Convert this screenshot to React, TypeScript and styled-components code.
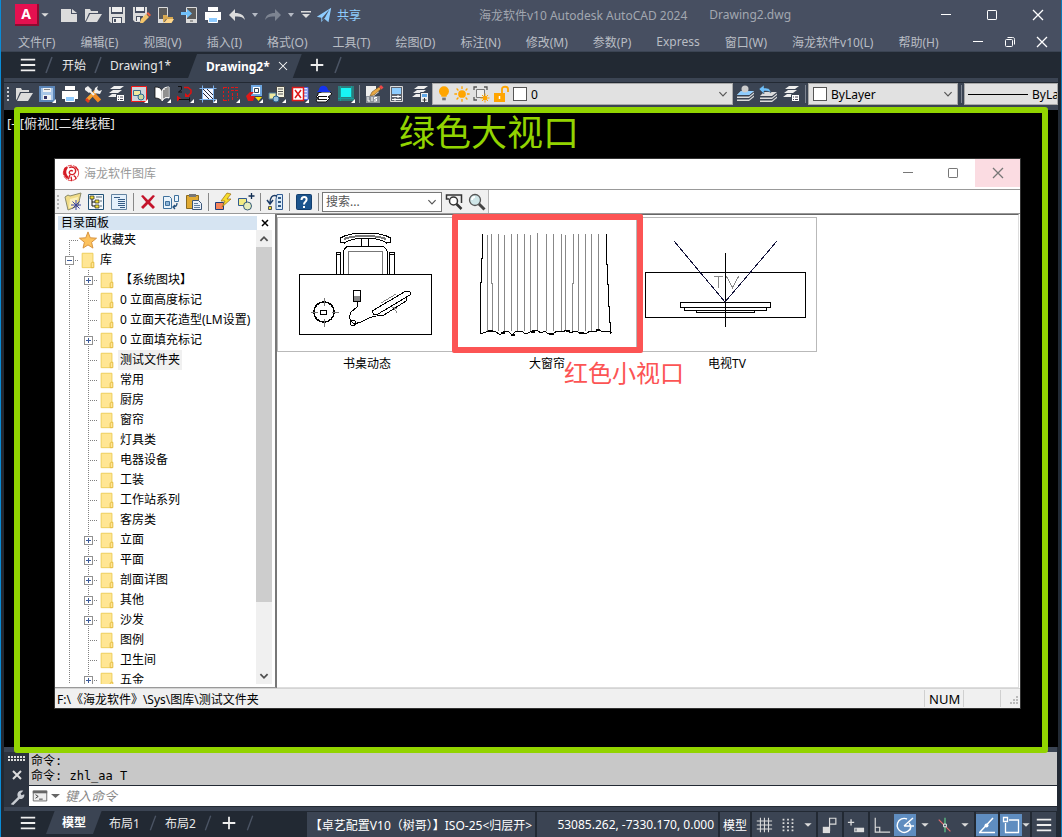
import React from 'react';
import styled, { createGlobalStyle, css } from 'styled-components';

const GlobalStyle = createGlobalStyle`
  * { box-sizing: border-box; }
  body { margin: 0; background: #222933; }
  body, button, input, select {
    font-family: "Noto Sans", "Noto Sans CJK SC", sans-serif;
    font-size: 12px;
  }
  button { padding: 0; border: 0; background: none; color: inherit; }
  svg { display: block; flex: none; }
  ul { margin: 0; padding: 0; list-style: none; }
`;

/* ---------- icons ---------- */

const L = '#dcdcdc';
const caret = <path d="M6 8h8l-4 4z" fill={L} />;
const page = <path d="M2 4h10v5h6v8H2zM13 4l5 4h-5z" fill={L} />;
const folder = <path d="M2 16V4h5l1 2h7v2H6l-3 7zM7 9h12l-5 8H3z" fill={L} />;
const printer = (
  <>
    <path d="M5 2h10v4H5zM2 7h16v8h-3v-2H5v2H2z" fill="#fff" />
    <path d="M5.500 12.500h9v5h-9z" fill="#8fcbff" stroke="#fff" />
  </>
);
const sheets = (
  <path d="M8 2h10l-4 3H4zM7 6h9l-4 3H3zM6 10h7l-3 3H2z" fill="#eee" />
);
const corner = <path d="M19 15v4h-4z" fill="#fff" />;
const stack = (
  <path
    d="M6 7h13l-5 4H2zM2 12.500h12l5-4v1.500l-5 4H2zM2 15.500h12l5-4V13l-5 4H2z"
    fill={L}
  />
);
const lens = (
  <>
    <path d="M11.500 11.500l6 6" stroke="#444" strokeWidth="3" />
    <circle cx="8" cy="8" r="5.500" fill="#cfe6e8" stroke="#555" strokeWidth="1.300" />
    <path d="M5 8a3 3 0 0 1 3-3" stroke="#fff" strokeWidth="1.800" fill="none" />
  </>
);
const gold = '#ffa500';

const icons: Record<string, React.ReactNode> = {
  caret,
  page,
  folder,
  printer,
  lens,
  disk: (
    <>
      <path d="M2 2h16v16H4l-2-2z" fill={L} />
      <path d="M4 2h12v7H4zM5 12h10v6H5z" fill="#474f61" />
      <path d="M5 2h10v5H5zM6 13h8v5H6z" fill="#eee" />
      <path d="M7 14h2v3H7z" fill="#474f61" />
    </>
  ),
  diskPen: (
    <>
      <path d="M2 2h14v7l-7 8H4l-2-2z" fill={L} />
      <path d="M4 2h10v6H4zM5 11h7v5H5z" fill="#474f61" />
      <path d="M5 2h8v4H5zM6 12h3v4H6z" fill="#eee" />
      <path d="M9 18l1-4 5-5 3 3-6 6z" fill="#f3c56b" />
      <path d="M15.500 8.500l1.500-1.500 3 3-1.500 1.500z" fill="#f0603c" />
    </>
  ),
  deviceFolder: (
    <>
      <path d="M3.500 2.500h9v15h-9z" fill="#5b5b5b" stroke={L} />
      <path d="M3 14h6v4H3z" fill={L} />
      <path d="M8 18v-8h4l1 2h5v2h-7z" fill="#d8a850" />
      <path d="M12 14h7l-2.500 4H9z" fill="#ffd68a" />
    </>
  ),
  deviceArrow: (
    <>
      <path d="M7.500 2.500h10v15h-10z" fill="#5b5b5b" stroke={L} />
      <path d="M7 14h11v4H7z" fill={L} />
      <path d="M2 7h6V4l5 4.500L8 13v-3H2z" fill="#6fc0fb" />
      <path d="M11 16h3" stroke="#5b5b5b" />
    </>
  ),
  undo: <path d="M8 4v4c6 0 9 2 10 7-2-3-5-4-10-3.500V16L2 10z" fill={L} />,
  redo: <path d="M12 4v4c-6 0-9 2-10 7 2-3 5-4 10-3.500V16l6-6z" fill="#7d8491" />,
  caretDim: <path d="M7 8h6l-3 4z" fill="#b5bac4" />,
  more: <path d="M5 6h10v1.500H5zM6 9h8l-4 4z" fill={L} />,
  plane: (
    <>
      <path d="M2 12L18 2l-3 16-5-4-3 4v-5z" fill="#8ecdff" />
      <path d="M8 13l8-9-5 9-3 3z" fill="#474f61" />
    </>
  ),
  saveBlue: (
    <>
      <path d="M3 3h14v14H3z" fill="#a9c7e8" stroke="#5c86b8" strokeWidth="2" />
      <path d="M6 4h8v4H6zM6 11h8v5H6z" fill="#f2f2f2" />
      <path d="M7 12h3v3H7z" fill="#336" />
      <path d="M7 5.500h6" stroke="#888" />
      {corner}
    </>
  ),
  tools: (
    <>
      <path d="M4 16L13 7" stroke="#f5a030" strokeWidth="3.500" />
      <path d="M5 5l7 7" stroke="#eee" strokeWidth="2" />
      <path d="M11 11l5.500 6" stroke="#f08a24" strokeWidth="4.500" />
      <path d="M2 4l3-2 4 4-3 3-4-3zM12 4l3-2-1 3 2 2 3-1-2 4-6-1z" fill="#eee" />
      <path d="M2 16l2-2 3 3-2 2z" fill="#e03a1a" />
    </>
  ),
  sheetsList: (
    <>
      {sheets}
      <path d="M10.500 10.500h8v7h-8z" fill="#fff" stroke="#3b4453" />
      <path d="M12 13h1m1 0h3m-5 2.500h1m1 0h3" stroke="#445" />
    </>
  ),
  redShapes: (
    <>
      <path d="M2.500 2.500h15v15h-15z" fill="#cfd6dc" stroke="#f01818" />
      <path d="M4.500 6.500h7v5h-7z" fill="#f0eaa0" stroke="#3d6c8a" />
      <circle cx="12" cy="13" r="3" fill="#cddba0" stroke="#2c6a95" />
      {corner}
    </>
  ),
  book: (
    <>
      <path d="M3 3c4 0 6 1 7 4v10c-2-2-4-3-7-3z" fill="#fff" stroke="#111" strokeWidth=".8" />
      <path d="M10 7c1-3 4-4 7-4v11c-3-1-5 0-7 3z" fill="#cfcfcf" stroke="#fff" />
      <path d="M12 6v8m2-10v9m2-10v10" stroke="#333" strokeWidth=".8" />
      {corner}
    </>
  ),
  numPath: (
    <>
      <path d="M3 2.500h3.500v3L3.500 8H7" stroke="#111" fill="none" />
      <path d="M9 3.500h4l3 2.500v3l-3 3" stroke="#e01010" strokeWidth="1.500" fill="none" />
      <path d="M10 9v4h5zM2 11.500l4 3-4 3z" fill="#e01010" />
      <path d="M4 15.500h11m-.500-2v4" stroke="#111" />
      {corner}
    </>
  ),
  hatch: (
    <>
      <path d="M4 4h11v11H4z" fill="#f4f6ff" />
      <path d="M4 8l7 7M4 4l11 11M8 4l7 7" stroke="#223" />
      <path d="M1.500 4.500h17M1.500 15.500h17M4.500 1.500v17M15.500 1.500v17" stroke="#7fb1ea" />
      {corner}
    </>
  ),
  redDots: (
    <>
      <path d="M2.500 3v14M7.500 3v14" stroke="#e01818" strokeDasharray="2 2" />
      <path d="M3 3.500h4M3 16.500h4M10 3.500h8M10 6.500h8M11.500 9v8M16.500 9v5" stroke="#e01818" strokeDasharray="3 1" />
      {corner}
    </>
  ),
  swap: (
    <>
      <path d="M8 2h9v9H8z" fill="#fff" stroke="#6ea6e0" strokeWidth="2" />
      <path d="M10.500 4.500h4v4h-4z" stroke="#345" />
      <path d="M2 12h9l-2 5H4zM6 8h4l-4 4H2z" fill="#e01818" />
      <path d="M11 13h7l-3.500 4z" fill="#ffe100" />
      {corner}
    </>
  ),
  shapesPage: (
    <>
      <path d="M9.500 2.500h8v11h-8z" fill="#f5f3df" stroke="#444" />
      <path d="M11 5h5m-5 2.500h5m-5 2.500h5" stroke="#555" />
      <path d="M2 9h7v6H2z" fill="#f0eaa0" stroke="#4f7f9c" />
      <circle cx="9" cy="15" r="3" fill="#9ac1dd" stroke="#29628c" />
      {corner}
    </>
  ),
  crossBox: (
    <>
      <path d="M9 3.500h9v12H9z" fill="#dfe8ff" stroke="#4a62e8" />
      <path d="M14 6h3m-3 3h3m-3 3h3" stroke="#4a62e8" />
      <path d="M2.500 3.500h11v13h-11z" fill="#fff" stroke="#e01818" strokeWidth="1.500" />
      <path d="M5 6l6 8m0-8l-6 8" stroke="#e01818" strokeWidth="1.500" />
      {corner}
    </>
  ),
  hatStack: (
    <>
      <path d="M5 9l4-1h8l2 2-4 3 2 1-4 4H4l-1-2 3-2-3-1 2-2z" fill="#fff" stroke="#111" />
      <path d="M5 12.500h9m-9 3h9" stroke="#111" />
      <path d="M6 6c0-5 8-6 9 0l3 2H4z" fill="#1433f0" />
    </>
  ),
  cyan: (
    <>
      <path d="M2 2h16v15H2z" fill="#2b7d7d" />
      <path d="M5 4h10v9H5z" fill="#18f4f4" />
      <path d="M4.500 2v15M2 14.500h16M15.500 2v13" stroke="#1a9a9a" />
      {corner}
    </>
  ),
  lisp: (
    <>
      <path d="M2 2h10v3l3 3-5 4H2z" fill="#eee" />
      <path d="M6 12l2-4 7-5 2 2-7 6z" fill="#e8a845" stroke="#6b4c1c" strokeWidth=".6" />
      <path d="M15 3l2-2 2.500 2.500-2 2z" fill="#f04848" />
      <path d="M2 12h14v7H2z" fill="#8d929b" />
      <path d="M4 13v4h2m2-4v4m5-3.500h-2.500v1.500h2v2H10" stroke="#fff" fill="none" />
    </>
  ),
  panelSliders: (
    <>
      <path d="M3.500 2.500h12v15h-12z" fill="#5d646f" stroke={L} />
      <path d="M5 4h9v6H5z" fill="#8ecdff" />
      <path d="M5 12.500h9M5 15.500h9M11 11v3m-3 0v3" stroke="#fff" />
    </>
  ),
  stackPlus: (
    <>
      {sheets}
      <path d="M10.500 8.500h8v10h-8z" fill="#eee" stroke="#3b4453" />
      <path d="M12 10h5v3h-5z" fill="#62a8e6" />
      <path d="M12.500 16h4m-2-2v4" stroke="#333" />
    </>
  ),
  stackUser: (
    <>
      {stack}
      <path d="M6 7h13l-5 4H2z" fill="#8ecdff" />
      <circle cx="10" cy="5" r="3.500" fill="#ccc" />
    </>
  ),
  stackBack: (
    <>
      <g transform="translate(0 1)">{stack}</g>
      <path d="M6 1v3c5 0 6 1 7 5-2-2-4-2-7-2v3L1 5z" fill="#6fc0fb" stroke="#3b4453" strokeWidth=".5" />
    </>
  ),
  bulb: (
    <>
      <circle cx="10" cy="7" r="5.500" fill={gold} />
      <path d="M7 10h6v3H7z" fill={gold} />
      <path d="M8 14h4v3H8z" fill="#777" />
    </>
  ),
  sun: (
    <>
      <circle cx="10" cy="10" r="4.300" fill={gold} />
      <path d="M10 1.500v3m0 11v3M1.500 10h3m11 0h3M4 4l2 2m8 8l2 2M4 16l2-2m8-8l2-2" stroke={gold} strokeWidth="1.500" />
    </>
  ),
  frameSun: (
    <>
      <path d="M3 6V3h3m7 0h3v3M3 13v3h3" fill="none" stroke="#555" strokeWidth="1.300" />
      <path d="M5.500 5.500h8v8h-8z" fill="#eee" stroke="#777" />
      <circle cx="14" cy="14" r="2.500" fill={gold} />
      <path d="M14 9.500v1.500m0 6v1.500m-4.500-4.500h1.500m6 0h1.500m-7.500-3l1 1m4 4l1 1m0-6l-1 1m-4 4l-1 1" stroke={gold} />
    </>
  ),
  unlock: (
    <>
      <path d="M3 9h11v9H3z" fill={gold} />
      <path d="M11 9V5c0-3 6-3 6 0v3" fill="none" stroke={gold} strokeWidth="1.800" />
      <path d="M8.500 12v3" stroke="#fff" strokeWidth="1.500" />
    </>
  ),
  newLib: (
    <>
      <path d="M2 5l3-2 2 1 11-3-3 13-10 4z" fill="#f1dc88" stroke="#8b8a68" />
      <path d="M7 7l8-2-2 9-7 2z" fill="#fbf1bd" />
      <path d="M13 8v10m-5-5h10m-8.500-3.500l7 7m0-7l-7 7" stroke="#3945a2" />
    </>
  ),
  treeView: (
    <>
      <path d="M2.500 2.500h15v15h-15z" fill="#f4f8fb" stroke="#225277" />
      <path d="M6 5v9h4m-4-4h4" stroke="#111" fill="none" />
      <path d="M4 4h4v3H4zM9 8h4v3H9zM9 13h4v3H9z" fill="#f5e236" stroke="#222" strokeWidth=".7" />
      <path d="M10 5h6m-2 4h2m-2 5h2" stroke="#567" />
    </>
  ),
  listView: (
    <>
      <path d="M2.500 2.500h15v15h-15z" fill="#e4f0fb" stroke="#6383a0" />
      <path d="M5 5.500h6m-2 2h7m-7 2h7m-7 2h7m-7 2h7m-5 2h5" stroke="#355b84" />
    </>
  ),
  remove: <path d="M3 4l2-1 5 5 5-5 2 1-5 6 5 5-2 2-5-5-5 5-2-2 5-5z" fill="#c4142b" />,
  copyDoc: (
    <>
      <path d="M2.500 4.500h6l2 2v10h-8z" fill="#eaf4fc" stroke="#3f719c" />
      <path d="M4.500 9.500h4v4h-4z" stroke="#3f719c" fill="#8fb5d8" />
      <path d="M13.500 3.500h4v6h-4z" fill="#eaf4fc" stroke="#3f719c" />
      <path d="M16 11c0 3-1 4-4 4m2-2l-2 2 2 2" stroke="#27527c" fill="none" strokeWidth="1.300" />
    </>
  ),
  paste: (
    <>
      <path d="M2.500 3.500h12v13h-12z" fill="#e1aa32" stroke="#8a6a20" />
      <path d="M5 2h7v3H5z" fill="#777" />
      <path d="M8.500 8.500h6l3 3v6h-9z" fill="#eaf1fa" stroke="#3c5778" />
      <path d="M10 11.500h4m-4 2h6m-6 2h6" stroke="#61809f" />
    </>
  ),
  flash: (
    <>
      <path d="M2.500 10.500h8v7h-8z" fill="#f8845a" stroke="#203b78" />
      <path d="M14 1L8 9h4l-3 6 9-8h-4l4-5z" fill="#f6dc2c" stroke="#9b6c10" strokeWidth=".7" />
    </>
  ),
  addShape: (
    <>
      <path d="M2.500 6.500h8v7h-8z" fill="#f3ec84" stroke="#315b92" />
      <circle cx="11.500" cy="14" r="4" fill="#e6edbc" stroke="#345b78" />
      <path d="M15.500 1v6m-3-3h6" stroke="#112d52" strokeWidth="1.300" />
    </>
  ),
  route: (
    <>
      <path d="M12 2.500h5.500v15H11V7z" fill="#dcecf9" stroke="#315b92" />
      <path d="M13 5h3v2h-3zm0 4h3v2h-3zm0 4h3v2h-3z" fill="#355b84" />
      <path d="M12 4C7 2 5 6 5 11M2 8l3 4 3-4" stroke="#1c3c67" strokeWidth="1.500" fill="none" />
      <path d="M3.500 14.500h3v3h-3z" fill="#f4de27" stroke="#555" />
    </>
  ),
  help: (
    <>
      <rect x="2.500" y="2.500" width="15" height="15" rx="1" fill="#1b548d" stroke="#123e6e" />
      <path d="M7.500 8c0-4 6-4 5 0-.500 2-2.500 2-2.500 4.500m0 1.500v2" stroke="#fff" strokeWidth="2" fill="none" />
    </>
  ),
  searchBox: (
    <>
      <path d="M5 7H2.500V3h15v8" stroke="#333" strokeWidth="1.500" fill="none" />
      <circle cx="9.500" cy="9" r="4" fill="#fff" stroke="#333" strokeWidth="1.500" />
      <path d="M12.500 12l5 5" stroke="#333" strokeWidth="2.500" />
    </>
  ),
  grid: <path d="M6 2v16m4.500-16v16M15 2v16M2 5.500h17M2 10h17M2 14.500h17" stroke={L} strokeWidth="1.200" />,
  dots: (
    <path
      d="M4 4h2m3 0h2m3 0h2M4 8h2m3 0h2m3 0h2M4 12h2m3 0h2m3 0h2M4 16h2m3 0h2m3 0h2"
      stroke={L}
      strokeWidth="2"
    />
  ),
  infer: (
    <>
      <path d="M2 12h8v7H2z" fill={L} />
      <path d="M9.500 17V2.500h7V9H10" stroke={L} strokeWidth="1.300" fill="none" />
    </>
  ),
  dynInput: (
    <>
      <path d="M1 7h7M4.500 3.500v7" stroke={L} strokeWidth="1.500" />
      <path d="M8 13h11v5H8z" fill={L} />
      <path d="M10 14v3" stroke="#3b4453" />
    </>
  ),
  ortho: <path d="M2.500 2v16H19M2.500 12.500h5V18" stroke={L} strokeWidth="1.300" fill="none" />,
  polar: (
    <path
      d="M16 12a7 7 0 1 1-4-8M9 11h10M9 11l9-8m-4 5c2 2 2 4 1 7"
      stroke="#fff"
      strokeWidth="1.400"
      fill="none"
    />
  ),
  iso: (
    <>
      <path d="M3 4l13 13" stroke="#e26c6c" strokeWidth="1.300" />
      <path d="M10 2v16" stroke="#5fd28b" strokeWidth="1.300" />
      <path d="M8.500 9h3v3h-3z" stroke="#fff" fill="#3b4453" />
    </>
  ),
  track: (
    <>
      <path d="M3 17L16 3M2 17.500h16" stroke="#fff" strokeWidth="1.500" />
      <circle cx="9.500" cy="10.500" r="2" fill="#fff" />
    </>
  ),
  osnap: (
    <>
      <path d="M8 5h9.500v12.500H4.500V8" stroke="#fff" strokeWidth="1.300" fill="none" />
      <path d="M2.500 2.500h4v4h-4z" stroke="#fff" fill="none" strokeWidth="1.300" />
    </>
  ),
  burger: <path d="M2 4h16M2 10h16M2 16h16" stroke="#eee" strokeWidth="2" />,
  plus: <path d="M3 10h14M10 3v14" stroke="#eee" strokeWidth="2" />,
  slash: <path d="M7 18L13 2" stroke="#4b5464" strokeWidth="1.500" />,
  close: <path d="M5 5l10 10m0-10L5 15" stroke="currentColor" strokeWidth="1.300" />,
  closeBold: <path d="M5 5l10 10m0-10L5 15" stroke="currentColor" strokeWidth="2.500" />,
  minimize: <path d="M5 9.500h10" stroke="currentColor" />,
  maximize: <rect x="5.500" y="5.500" width="9" height="9" rx=".6" stroke="currentColor" />,
  restore: (
    <>
      <rect x="5.500" y="7.500" width="7" height="7" rx="1" stroke="currentColor" />
      <path d="M7.500 5.500h5c1.500 0 2 .5 2 2v5" stroke="currentColor" />
    </>
  ),
  chevron: <path d="M6 8l4 4 4-4" stroke="#555" strokeWidth="1.300" fill="none" />,
  up: <path d="M6 12l4-4 4 4" stroke="#505050" strokeWidth="2" fill="none" />,
  down: <path d="M6 8l4 4 4-4" stroke="#505050" strokeWidth="2" fill="none" />,
  wrench: (
    <path d="M3 18l8-8c-2-5 2-8 6-7l-3 3 1 2 3-1c1 4-3 6-5 5l-7 7z" fill="#c8ccd2" />
  ),
  prompt: (
    <>
      <path d="M2.500 4.500h15v11h-15z" fill="#eee" stroke="#666" />
      <path d="M2 4h16v3H2z" fill="#666" />
      <path d="M5 8.500l3 2-3 2m4 1h4" stroke="#333" fill="none" />
    </>
  ),
  star: (
    <path
      d="M10 1l2.500 6.500 7 .5-5.500 4.500 1.500 6.500-5.500-3.500L4.500 19 6 12.500.500 8l7-.5z"
      fill="#fcc25e"
      stroke="#d38c38"
    />
  ),
  treeFolder: (
    <>
      <path d="M3.500 2.500h12v16h-12z" fill="#ffe694" stroke="#eccb52" />
      <path d="M14.500 12.500h2v6h-3v-5z" fill="#ffe694" stroke="#e2b93b" />
    </>
  ),
  seal: (
    <>
      <circle cx="10" cy="10" r="8.500" fill="#fff" stroke="#e0343a" strokeDasharray="5 1" />
      <path d="M3 4c-3 5-1 10 3 13l1-3c-3-3-3-7 0-10-1-1-3-1-4 0z" fill="#d41c24" />
      <path
        d="M8 4c4-2 8 1 7 5-1 3-5 4-7 1 0-2 2-4 4-2M9 12c-1 1-1 3-2 5m6-4c2 1 3 2 2 4m-5-3l1 5M15 3l3 4"
        stroke="#d41c24"
        strokeWidth="1.500"
        fill="none"
      />
    </>
  ),
};

function Icon({ name, size = 20 }: { name: string; size?: number }) {
  return (
    <svg width={size} height={size} viewBox="0 0 20 20" fill="none" aria-hidden="true">
      {icons[name]}
    </svg>
  );
}

/* ---------- frame, title and menus ---------- */

const AppFrame = styled.div`
  display: flex;
  flex-direction: column;
  height: 100vh;
  min-height: 600px;
  overflow: hidden;
  background: #222933;
  border-left: 1px solid #0a8bd6;
  border-right: 1px solid #0a78b8;
`;

const Header = styled.header`
  height: 52px;
  background: #474f61;
  border-bottom: 1px solid #3b4453;
`;

const TitleRow = styled.div`
  display: flex;
  align-items: center;
  height: 30px;
  padding-left: 14px;
`;

const AppLogo = styled.button`
  width: 24px;
  height: 22px;
  background: #e51050;
  border-right: 2px solid #8d0b30;
  border-bottom: 2px solid #8d0b30;
  color: #fff;
  font-size: 14px;
  font-weight: 700;
  line-height: 18px;
`;

const IconButton = styled.button<{ $w?: number; $h?: number; $on?: boolean }>`
  display: flex;
  align-items: center;
  justify-content: center;
  flex: none;
  overflow: hidden;
  width: ${(p) => p.$w ?? 24}px;
  height: ${(p) => p.$h ?? 24}px;
  ${(p) => p.$on && css`background: #5f8dc0;`}
`;

const Spacer = styled.span<{ $w: number }>`
  flex: none;
  width: ${(p) => p.$w}px;
`;

const ShareButton = styled.button`
  display: flex;
  align-items: center;
  gap: 4px;
  color: #8ecdff;
`;

const WindowTitle = styled.div`
  display: flex;
  flex: 1;
  justify-content: center;
  gap: 22px;
  padding-right: 14px;
  color: #a2a7b0;
  white-space: nowrap;
`;

const WindowButtons = styled.div`
  display: flex;
  color: #fff;
`;

const MenuRow = styled.nav`
  display: flex;
  align-items: center;
  height: 23px;
  padding: 0 3px 0 17px;
  color: #b9bdc4;
`;

const MenuList = styled.div`
  display: flex;
  flex: 1;
  gap: 25px;
  white-space: nowrap;
`;

/* ---------- document and layout tabs ---------- */

const TabRow = styled.div<{ $h?: number }>`
  display: flex;
  align-items: center;
  height: ${(p) => p.$h ?? 26}px;
  padding-left: 17px;
  color: #e8e8e8;
`;

const Tab = styled.button<{ $pad?: number }>`
  height: 24px;
  padding: 0 ${(p) => p.$pad ?? 2}px;
  white-space: nowrap;
`;

const ActiveTab = styled.div`
  display: flex;
  align-items: center;
  align-self: flex-end;
  height: 24px;
  padding: 0 8px 0 16px;
  background: #3b4453;
  clip-path: polygon(9px 0, 100% 0, calc(100% - 9px) 100%, 0 100%);
  color: #fff;

  button { font-weight: 700; }
`;

/* ---------- toolbar ---------- */

const Toolbar = styled.div`
  display: flex;
  align-items: center;
  height: 32px;
  margin: 0 3px;
  padding-bottom: 4px;
  background: #3b4453;
  border-top: 4px solid #3b4453;
  box-shadow: inset 0 1px #222933;
  overflow: hidden;
`;

const Grip = styled.div<{ $dark?: boolean }>`
  flex: none;
  width: 4px;
  height: 16px;
  margin: 0 ${(p) => (p.$dark ? 1 : 2)}px;
  background-image: radial-gradient(${(p) => (p.$dark ? '#b5b5b5' : '#c8ccd2')} 1px, transparent 1px);
  background-size: 4px 4px;
`;

const Divider = styled.div<{ $w?: number; $h?: number; $dark?: boolean }>`
  flex: none;
  width: ${(p) => p.$w ?? 5}px;
  height: ${(p) => p.$h ?? 18}px;
  background: linear-gradient(${(p) => (p.$dark ? '#888, #888' : '#7d8491, #7d8491')}) center / 1px 100% no-repeat;
`;

const Combo = styled.label<{ $w?: number }>`
  display: flex;
  align-items: center;
  flex: ${(p) => (p.$w ? `0 0 ${p.$w}px` : '1 1 0')};
  min-width: 0;
  height: 22px;
  padding-left: 2px;
  overflow: hidden;
  background: #e1e1e1;
  border: 1px solid #a9a9a9;
  color: #000;
`;

const ComboSelect = styled.select`
  flex: 1;
  min-width: 0;
  padding: 0 0 0 4px;
  border: 0;
  appearance: none;
  background: none;
  color: #000;
`;

const Swatch = styled.span`
  flex: none;
  width: 14px;
  height: 14px;
  margin-left: 2px;
  background: #fff;
  border: 1px solid #555;
`;

const LineSample = styled.span`
  flex: none;
  width: 60px;
  height: 1px;
  margin-left: 1px;
  background: #000;
`;

/* ---------- drawing area ---------- */

const Canvas = styled.main`
  position: relative;
  display: flex;
  flex: 1;
  flex-direction: column;
  min-height: 0;
  margin: 0 3px;
  padding: 4px 37px 38px 50px;
  background: #000;
`;

const ViewLabel = styled.div`
  height: 18px;
  margin: 0 0 26px -47px;
  color: #e8e8e8;
  font-size: 13px;
  line-height: 18px;
`;

const GreenFrame = styled.div`
  position: absolute;
  z-index: 2;
  inset: -3px 10px -6px 10px;
  border: 6px solid #92d400;
  border-radius: 3px;
  pointer-events: none;
`;

const GreenNote = styled.div`
  position: absolute;
  top: 1px;
  left: 395px;
  color: #92d400;
  font-size: 36px;
  line-height: 44px;
`;

const Dialog = styled.section`
  display: flex;
  flex: 1;
  flex-direction: column;
  min-height: 0;
  background: #fff;
  border: 1px solid #333;
  color: #000;
`;

const DialogTitle = styled.div`
  display: flex;
  align-items: flex-start;
  height: 31px;
  padding-left: 7px;
  border-bottom: 1px solid #999;
  color: #999;

  & > svg { margin-top: 5px; }
`;

const DialogName = styled.span`
  flex: 1;
  padding-left: 4px;
  line-height: 29px;
`;

const CaptionButton = styled.button<{ $hot?: boolean }>`
  display: flex;
  align-items: center;
  justify-content: center;
  width: 45px;
  height: 28px;
  background: ${(p) => (p.$hot ? '#fbdce2' : '#fff')};
  color: #777;
`;

const DialogTools = styled.div`
  display: flex;
  height: 24px;
  border-bottom: 1px solid #999;
`;

const ToolStrip = styled.div`
  display: flex;
  align-items: center;
  background: #f0f0f0;
  border-right: 1px solid #b5b5b5;
`;

const SearchBox = styled.label`
  display: flex;
  align-items: center;
  width: 120px;
  height: 20px;
  margin-left: 1px;
  background: #fff;
  border: 1px solid #777;
`;

const SearchInput = styled.input`
  flex: 1;
  min-width: 0;
  padding: 0 3px;
  border: 0;
  outline: 0;

  &::placeholder { color: #555; opacity: 1; }
`;

const DialogBody = styled.div`
  display: flex;
  flex: 1;
  min-height: 0;
`;

/* ---------- catalogue tree ---------- */

const Sidebar = styled.aside`
  display: flex;
  flex: none;
  flex-direction: column;
  width: 222px;
  padding: 2px 3px 3px;
  border-right: 2px solid #777;
  border-bottom: 1px solid #999;
`;

const PanelHead = styled.div`
  display: flex;
  align-items: center;
  height: 14px;
`;

const PanelName = styled.div`
  flex: 1;
  height: 14px;
  padding-left: 3px;
  background: #d6e4f2;
  line-height: 14px;
`;

const TreeArea = styled.div`
  display: flex;
  flex: 1;
  min-height: 0;
`;

const Tree = styled.ul`
  flex: 1;
  overflow: hidden;
  padding-left: 2px;
`;

const TreeRow = styled.li`
  display: flex;
  align-items: center;
  height: 20px;
`;

const dotsV = 'repeating-linear-gradient(#808080 0 1px, transparent 1px 2px)';
const dotsH = 'repeating-linear-gradient(90deg, #808080 0 1px, transparent 1px 2px)';

const Guide = styled.span<{ $start?: boolean; $branch?: boolean }>`
  display: flex;
  align-items: center;
  justify-content: center;
  width: 19px;
  height: 20px;
  background-repeat: no-repeat;
  background-image: ${dotsV}${(p) => p.$branch && `, ${dotsH}`};
  background-size: 1px ${(p) => (p.$start ? '10px' : '20px')}, 10px 1px;
  background-position: 9px ${(p) => (p.$start ? '10px' : '0')}, 9px 10px;
`;

const Expander = styled.button`
  width: 9px;
  height: 9px;
  background:
    linear-gradient(#3b5a9a, #3b5a9a) center / 5px 1px no-repeat,
    #fff;
  border: 1px solid #919191;

  &[aria-expanded='false'] {
    background:
      linear-gradient(#3b5a9a, #3b5a9a) center / 5px 1px no-repeat,
      linear-gradient(#3b5a9a, #3b5a9a) center / 1px 5px no-repeat,
      #fff;
  }
`;

const IconCell = styled.span<{ $w: number }>`
  width: ${(p) => p.$w}px;
`;

const NodeName = styled.span<{ $selected?: boolean }>`
  height: 20px;
  padding: 0 2px;
  background: ${(p) => (p.$selected ? '#f0f0f0' : 'none')};
  line-height: 20px;
  white-space: nowrap;
`;

const ScrollBar = styled.div`
  display: flex;
  flex-direction: column;
  width: 16px;
  background: #f0f0f0;
`;

const Thumb = styled.div`
  flex: 355;
  background: #cdcdcd;
`;

const TrackRest = styled.div`
  flex: 65;
`;

/* ---------- gallery ---------- */

const Gallery = styled.div`
  display: flex;
  flex: 1;
  flex-wrap: wrap;
  align-content: flex-start;
  min-width: 0;
  padding-top: 2px;
  margin-right: 1px;
  border-top: 1px solid #666;
  border-right: 1px solid #ddd;
  border-bottom: 1px solid #ddd;
`;

const Card = styled.figure`
  position: relative;
  width: 180px;
  margin: 0;
`;

const Thumbnail = styled.div`
  height: 135px;
  border: 1px solid #b9b9b9;
`;

const CardName = styled.figcaption`
  height: 24px;
  line-height: 24px;
  text-align: center;
`;

const RedFrame = styled.div`
  position: absolute;
  z-index: 1;
  top: -3px;
  left: -5px;
  width: 191px;
  height: 139px;
  border: 6px solid #fc5454;
  border-radius: 2px;
`;

const RedNote = styled.div`
  position: absolute;
  z-index: 1;
  top: 141px;
  left: 107px;
  color: #fc5454;
  font-size: 24px;
  line-height: 30px;
  white-space: nowrap;
`;

const DialogStatus = styled.footer`
  display: flex;
  align-items: center;
  height: 20px;
  padding-left: 2px;
  background: #f0f0f0;
  border-top: 1px solid #d4d4d4;
`;

const StatusPath = styled.span`
  flex: 1;
`;

const StatusCell = styled.span<{ $w: number }>`
  display: flex;
  align-items: center;
  width: ${(p) => p.$w}px;
  height: 17px;
  padding-left: 4px;
  border-left: 1px solid #d0d0d0;
  font-size: 13px;

  svg { margin: 5px 1px 0 auto; }
`;

/* ---------- command line ---------- */

const CommandPanel = styled.section`
  display: flex;
  flex: none;
  height: 64px;
  margin: 0 4px 0 3px;
  border-top: 5px solid #3b4453;
  border-bottom: 4px solid #3b4453;
`;

const CommandSide = styled.div`
  display: flex;
  flex-direction: column;
  align-items: center;
  justify-content: space-between;
  width: 25px;
  padding-top: 3px;
  background: #2c333f;
  color: #ddd;
`;

const CommandMain = styled.div`
  display: flex;
  flex: 1;
  flex-direction: column;
`;

const History = styled.div`
  flex: 1;
  padding: 2px 0 0 2px;
  background: #c8c8c8;
  border-bottom: 1px solid #222933;
  color: #000;
  font-family: "DejaVu Sans Mono", "Noto Sans CJK SC", monospace;
  line-height: 15px;
  white-space: pre;
`;

const PromptRow = styled.label`
  display: flex;
  align-items: center;
  height: 21px;
  padding-left: 2px;
  background: #fff;
  border-bottom: 1px solid #222933;
`;

const PromptInput = styled.input`
  flex: 1;
  padding: 0 2px;
  border: 0;
  outline: 0;
  font-size: 13px;

  &::placeholder { color: #888; font-style: italic; opacity: 1; }
`;

/* ---------- status bar ---------- */

const StatusBar = styled.footer`
  display: flex;
  align-items: flex-start;
  justify-content: space-between;
  height: 26px;
  padding: 1px 5px 0 0;
`;

const StatusGroups = styled.div`
  display: flex;
  gap: 2px;
  color: #fff;
`;

const StatusGroup = styled.div<{ $w?: number; $end?: boolean }>`
  display: flex;
  align-items: center;
  justify-content: ${(p) => (p.$end ? 'flex-end' : 'center')};
  width: ${(p) => (p.$w ? `${p.$w}px` : 'auto')};
  height: 25px;
  padding: 0 ${(p) => (p.$end ? 4 : 0)}px;
  background: #3b4453;
  white-space: nowrap;
`;

/* ---------- content ---------- */

const menus = [
  '文件(F)', '编辑(E)', '视图(V)', '插入(I)', '格式(O)', '工具(T)', '绘图(D)',
  '标注(N)', '修改(M)', '参数(P)', 'Express', '窗口(W)', '海龙软件v10(L)', '帮助(H)',
];

const quickTools: [string, number][] = [
  ['page', 24], ['folder', 24], ['disk', 24], ['diskPen', 24], ['deviceFolder', 24],
  ['deviceArrow', 24], ['printer', 24], ['undo', 24], ['caretDim', 12], ['redo', 24],
  ['caretDim', 12], ['more', 18],
];

const mainTools = [
  'folder', 'saveBlue', 'printer', 'tools', 'sheetsList', 'redShapes', 'book', 'numPath',
  'hatch', 'redDots', 'swap', 'shapesPage', 'crossBox', 'hatStack', 'cyan',
];

const dialogTools = [
  ['newLib', 'treeView', 'listView'],
  ['remove', 'copyDoc', 'paste'],
  ['flash', 'addShape'],
  ['route'],
  ['help'],
];

const tree: { name: string; more?: boolean; selected?: boolean }[] = [
  { name: '【系统图块】', more: true },
  { name: '0 立面高度标记' },
  { name: '0 立面天花造型(LM设置)' },
  { name: '0 立面填充标记', more: true },
  { name: '测试文件夹', selected: true },
  { name: '常用' },
  { name: '厨房' },
  { name: '窗帘' },
  { name: '灯具类' },
  { name: '电器设备' },
  { name: '工装' },
  { name: '工作站系列' },
  { name: '客房类' },
  { name: '立面', more: true },
  { name: '平面', more: true },
  { name: '剖面详图', more: true },
  { name: '其他', more: true },
  { name: '沙发', more: true },
  { name: '图例' },
  { name: '卫生间' },
  { name: '五金', more: true },
];

function DeskDrawing() {
  return (
    <svg width="178" height="133" viewBox="278 218 178 133" fill="none" stroke="#000" shapeRendering="crispEdges">
      <path d="M299.500 274.500h132v60h-132z" />
      <path d="M340.500 238c6-4 14-5 25-5s19 1 25 5v4l-4 1c-6-4-12-5-21-5s-15 1-21 5l-4-1z" />
      <path d="M344 239c10-4 32-4 42 0" stroke="#777" strokeWidth="2" />
      <path d="M361.500 239v7m7-7v7M343.500 274v-21c0-3 2-7 6-7h31c4 0 7 4 7 7v21" />
      <path d="M348.500 274v-23h34v23" stroke="#777" />
      <path d="M336.500 274v-22h4v22m49 0v-22h5v22m-58-20h4m49 0h5" />
      <circle cx="324" cy="312" r="10" strokeWidth="1.500" />
      <path d="M324.500 298v8m0 13v8m-14-14.500h7m14 0h7" stroke="#777" />
      <path d="M320.500 310.500h6v4h-6z" />
      <path d="M353.500 290.500h7v11h-7z" />
      <path d="M354 296h6v5h-6z" fill="#888" stroke="none" />
      <path d="M357 302v5l-6 5-2 6 4 5c9 2 13-6 23-7" />
      <circle cx="353" cy="323" r="2.500" />
      <path d="M372 311l34-20 4 1v3l-32 19-4 1zM377 316l7-1 22-14v-4" />
      <path d="M381 303l15-9m-2 14l3 5m-5-6l5 2" stroke="#888" />
    </svg>
  );
}

const folds: [number, number][] = [
  [487, 235], [491, 234], [498, 234], [504, 235], [511, 234], [517, 234], [524, 234], [530, 235],
  [537, 233], [546, 234], [553, 234], [561, 234], [565, 235], [573, 234], [578, 234], [585, 234],
  [591, 234], [598, 234],
];

function CurtainDrawing() {
  return (
    <svg width="178" height="133" viewBox="458 218 178 133" fill="none" stroke="#000" shapeRendering="crispEdges">
      {folds.map(([x, y], i) => (
        <path
          key={x}
          d={`M${x + 0.5} ${y}V${i === 1 || i === 13 ? 283 : 331}${i === 1 ? 'h1v48' : i === 13 ? 'h-1v48' : ''}`}
          stroke="#888"
        />
      ))}
      <path d="M482.500 234v24h-1v24h-1v52M606.500 234v30h1v20h1v22h1v16h1v12" />
      <path d="M480 334l6-2 3-1 4 1 2-1 4 3h2l3-3 5 1 3 3 3-3 6-1 5 3 6-3 5-1 4 3 4-2 3 3 6-1 3-2 5 1 5-2 3 3 5-2 6 2 5 1 4-3 5 1 3-2 6 2 6-1 2 2" />
      <path d="M488 331h5m8 2h4m6 2h4m16-3h4m14 2h5m12-3h4m9 2h5m12-3h4" strokeWidth="2" />
    </svg>
  );
}

function TvDrawing() {
  return (
    <svg width="178" height="133" viewBox="638 218 178 133" fill="none" stroke="#000" shapeRendering="crispEdges">
      <path d="M645.500 272.500h160v45h-160zM725.500 253v74" />
      <path d="M674 241l51 61 52-61" stroke="#15153c" />
      <path d="M714 276.500h9m-4.500 0v11m8-11l6 11 6-11" stroke="#888" />
      <path d="M680.500 302.500h90v5h-90zM684.500 307v3.500h82V307M696.500 310v2.500h58V310" />
    </svg>
  );
}

function CatalogueTree() {
  return (
    <Tree aria-label="目录面板">
      <TreeRow>
        <Guide $start $branch />
        <IconCell $w={19}><Icon name="star" size={18} /></IconCell>
        <NodeName>收藏夹</NodeName>
      </TreeRow>
      <TreeRow>
        <Guide $branch><Expander aria-label="库" aria-expanded="true" /></Guide>
        <IconCell $w={19}><Icon name="treeFolder" size={18} /></IconCell>
        <NodeName>库</NodeName>
      </TreeRow>
      {tree.map((node) => (
        <TreeRow key={node.name}>
          <Guide />
          <Guide $branch>
            {node.more && <Expander aria-label={node.name} aria-expanded="false" />}
          </Guide>
          <IconCell $w={20}><Icon name="treeFolder" size={18} /></IconCell>
          <NodeName $selected={node.selected}>{node.name}</NodeName>
        </TreeRow>
      ))}
    </Tree>
  );
}

function LibraryDialog() {
  return (
    <Dialog aria-label="海龙软件图库">
      <DialogTitle>
        <Icon name="seal" size={18} />
        <DialogName>海龙软件图库</DialogName>
        <CaptionButton aria-label="最小化"><Icon name="minimize" /></CaptionButton>
        <CaptionButton aria-label="最大化"><Icon name="maximize" /></CaptionButton>
        <CaptionButton $hot aria-label="关闭"><Icon name="close" /></CaptionButton>
      </DialogTitle>
      <DialogTools>
        <ToolStrip>
          <Grip $dark />
          {dialogTools.map((group) => (
            <React.Fragment key={group[0]}>
              {group.map((name) => (
                <IconButton key={name} $w={23} aria-label={name}><Icon name={name} /></IconButton>
              ))}
              <Divider $dark $w={6} />
            </React.Fragment>
          ))}
          <SearchBox>
            <SearchInput placeholder="搜索..." aria-label="搜索" />
            <Icon name="chevron" size={18} />
          </SearchBox>
          <IconButton $w={23} aria-label="查找"><Icon name="searchBox" /></IconButton>
          <IconButton $w={23} aria-label="放大"><Icon name="lens" /></IconButton>
        </ToolStrip>
      </DialogTools>
      <DialogBody>
        <Sidebar>
          <PanelHead>
            <PanelName>目录面板</PanelName>
            <IconButton $w={15} $h={14} aria-label="关闭面板"><Icon name="closeBold" size={12} /></IconButton>
          </PanelHead>
          <TreeArea>
            <CatalogueTree />
            <ScrollBar>
              <IconButton $w={16} $h={17} aria-label="向上"><Icon name="up" size={18} /></IconButton>
              <Thumb />
              <TrackRest />
              <IconButton $w={16} $h={17} aria-label="向下"><Icon name="down" size={18} /></IconButton>
            </ScrollBar>
          </TreeArea>
        </Sidebar>
        <Gallery>
          <Card>
            <Thumbnail><DeskDrawing /></Thumbnail>
            <CardName>书桌动态</CardName>
          </Card>
          <Card>
            <Thumbnail><CurtainDrawing /></Thumbnail>
            <CardName>大窗帘</CardName>
            <RedFrame />
            <RedNote>红色小视口</RedNote>
          </Card>
          <Card>
            <Thumbnail><TvDrawing /></Thumbnail>
            <CardName>电视TV</CardName>
          </Card>
        </Gallery>
      </DialogBody>
      <DialogStatus>
        <StatusPath>F:\《海龙软件》\Sys\图库\测试文件夹</StatusPath>
        <StatusCell $w={39}>NUM</StatusCell>
        <StatusCell $w={37} />
        <StatusCell $w={20}>
          <svg width="10" height="10" viewBox="0 0 10 10" fill="#bbb">
            <path d="M7 0h2v2H7zM7 3h2v2H7zM4 3h2v2H4zM7 6h2v2H7zM4 6h2v2H4zM1 6h2v2H1z" />
          </svg>
        </StatusCell>
      </DialogStatus>
    </Dialog>
  );
}

export default function App() {
  return (
    <AppFrame>
      <GlobalStyle />
      <Header>
        <TitleRow>
          <AppLogo>A</AppLogo>
          <IconButton $w={12} aria-label="应用菜单"><Icon name="caret" size={18} /></IconButton>
          <Spacer $w={6} />
          {quickTools.map(([name, w], i) => (
            <IconButton key={i} $w={w} aria-label={name}><Icon name={name} /></IconButton>
          ))}
          <ShareButton><Icon name="plane" size={18} />共享</ShareButton>
          <WindowTitle>
            <span>海龙软件v10 Autodesk AutoCAD 2024</span>
            <span>Drawing2.dwg</span>
          </WindowTitle>
          <WindowButtons>
            <IconButton $w={46} aria-label="最小化"><Icon name="minimize" /></IconButton>
            <IconButton $w={46} aria-label="最大化"><Icon name="maximize" /></IconButton>
            <IconButton $w={46} aria-label="关闭"><Icon name="close" /></IconButton>
          </WindowButtons>
        </TitleRow>
        <MenuRow>
          <MenuList>
            {menus.map((name) => <button key={name}>{name}</button>)}
          </MenuList>
          <WindowButtons>
            <IconButton $w={32} aria-label="最小化图形"><Icon name="minimize" /></IconButton>
            <IconButton $w={32} aria-label="还原图形"><Icon name="restore" /></IconButton>
            <IconButton $w={32} aria-label="关闭图形"><Icon name="close" /></IconButton>
          </WindowButtons>
        </MenuRow>
      </Header>

      <TabRow>
        <IconButton $w={20} aria-label="菜单"><Icon name="burger" size={18} /></IconButton>
        <IconButton as="span" $w={22}><Icon name="slash" /></IconButton>
        <Tab>开始</Tab>
        <IconButton as="span" $w={20}><Icon name="slash" /></IconButton>
        <Tab>Drawing1*</Tab>
        <Spacer $w={15} />
        <ActiveTab>
          <Tab>Drawing2*</Tab>
          <IconButton $w={22} aria-label="关闭标签"><Icon name="close" size={16} /></IconButton>
        </ActiveTab>
        <IconButton $w={30} aria-label="新建标签"><Icon name="plus" size={18} /></IconButton>
        <IconButton as="span" $w={12}><Icon name="slash" /></IconButton>
      </TabRow>

      <Toolbar>
        <Grip />
        {mainTools.map((name) => (
          <IconButton key={name} $w={23} aria-label={name}><Icon name={name} /></IconButton>
        ))}
        <Divider />
        <IconButton $w={23} aria-label="LISP"><Icon name="lisp" /></IconButton>
        <IconButton $w={23} aria-label="特性"><Icon name="panelSliders" /></IconButton>
        <IconButton $w={24} aria-label="图层特性"><Icon name="stackPlus" /></IconButton>
        <Combo>
          <Icon name="bulb" size={18} />
          <Icon name="sun" size={18} />
          <Icon name="frameSun" />
          <Icon name="unlock" />
          <Swatch />
          <ComboSelect aria-label="图层"><option>0</option></ComboSelect>
          <Icon name="chevron" size={18} />
        </Combo>
        <IconButton $w={23} aria-label="置为当前"><Icon name="stackUser" /></IconButton>
        <IconButton $w={23} aria-label="上一个图层"><Icon name="stackBack" /></IconButton>
        <IconButton $w={23} aria-label="图层状态"><Icon name="sheetsList" /></IconButton>
        <Divider $w={6} />
        <Combo $w={150}>
          <Swatch />
          <ComboSelect aria-label="颜色"><option>ByLayer</option></ComboSelect>
          <Icon name="chevron" size={18} />
        </Combo>
        <Divider $w={6} />
        <Combo $w={94}>
          <LineSample />
          <ComboSelect aria-label="线型"><option>ByLayer</option></ComboSelect>
        </Combo>
      </Toolbar>

      <Canvas>
        <ViewLabel>[-][俯视][二维线框]</ViewLabel>
        <GreenNote>绿色大视口</GreenNote>
        <LibraryDialog />
        <GreenFrame />
      </Canvas>

      <CommandPanel>
        <CommandSide>
          <svg width="18" height="8" viewBox="0 0 18 8" stroke="#ddd" strokeDasharray="2 1">
            <path d="M0 2h18M0 5h18" strokeWidth="2" />
          </svg>
          <IconButton $w={20} $h={16} aria-label="关闭命令行"><Icon name="closeBold" size={16} /></IconButton>
          <IconButton $w={20} $h={20} aria-label="自定义"><Icon name="wrench" size={18} /></IconButton>
        </CommandSide>
        <CommandMain>
          <History>{'命令:\n命令: zhl_aa T'}</History>
          <PromptRow>
            <Icon name="prompt" size={18} />
            <svg width="14" height="8" viewBox="0 0 14 8"><path d="M2 2h9L6.500 6z" fill="#666" /></svg>
            <PromptInput placeholder="键入命令" aria-label="键入命令" />
          </PromptRow>
        </CommandMain>
      </CommandPanel>

      <StatusBar>
        <TabRow $h={22}>
          <IconButton $w={20} aria-label="布局菜单"><Icon name="burger" size={18} /></IconButton>
          <Spacer $w={8} />
          <ActiveTab>
            <Tab $pad={0}>模型</Tab>
            <Spacer $w={8} />
          </ActiveTab>
          <Tab $pad={7}>布局1</Tab>
          <IconButton as="span" $w={12}><Icon name="slash" size={18} /></IconButton>
          <Tab $pad={6}>布局2</Tab>
          <IconButton as="span" $w={12}><Icon name="slash" size={18} /></IconButton>
          <IconButton $w={30} aria-label="新建布局"><Icon name="plus" size={18} /></IconButton>
          <IconButton as="span" $w={12}><Icon name="slash" size={18} /></IconButton>
        </TabRow>
        <StatusGroups>
          <StatusGroup $w={228}>【卓艺配置V10（树哥）】ISO-25&lt;归层开&gt;</StatusGroup>
          <StatusGroup $w={181} $end>53085.262, -7330.170, 0.000</StatusGroup>
          <StatusGroup $w={30}>模型</StatusGroup>
          <StatusGroup>
            <IconButton aria-label="栅格"><Icon name="grid" size={18} /></IconButton>
            <IconButton aria-label="捕捉"><Icon name="dots" size={18} /></IconButton>
            <IconButton $w={16} aria-label="捕捉选项"><Icon name="caret" size={18} /></IconButton>
          </StatusGroup>
          <StatusGroup>
            <IconButton aria-label="推断约束"><Icon name="infer" size={18} /></IconButton>
          </StatusGroup>
          <StatusGroup>
            <IconButton aria-label="动态输入"><Icon name="dynInput" size={18} /></IconButton>
          </StatusGroup>
          <StatusGroup>
            <IconButton aria-label="正交"><Icon name="ortho" size={18} /></IconButton>
            <IconButton $on $w={22} $h={22} aria-label="极轴"><Icon name="polar" /></IconButton>
            <IconButton $w={18} aria-label="极轴选项"><Icon name="caret" size={18} /></IconButton>
            <IconButton $w={22} aria-label="等轴测"><Icon name="iso" size={18} /></IconButton>
            <IconButton $w={18} aria-label="等轴测选项"><Icon name="caret" size={18} /></IconButton>
          </StatusGroup>
          <StatusGroup>
            <IconButton $on $w={22} $h={22} aria-label="对象追踪"><Icon name="track" /></IconButton>
          </StatusGroup>
          <StatusGroup>
            <IconButton $on $w={22} $h={22} aria-label="对象捕捉"><Icon name="osnap" /></IconButton>
            <IconButton $w={8} aria-label="捕捉设置"><Icon name="caret" size={18} /></IconButton>
          </StatusGroup>
          <StatusGroup>
            <IconButton aria-label="自定义状态栏"><Icon name="burger" size={18} /></IconButton>
          </StatusGroup>
        </StatusGroups>
      </StatusBar>
    </AppFrame>
  );
}
